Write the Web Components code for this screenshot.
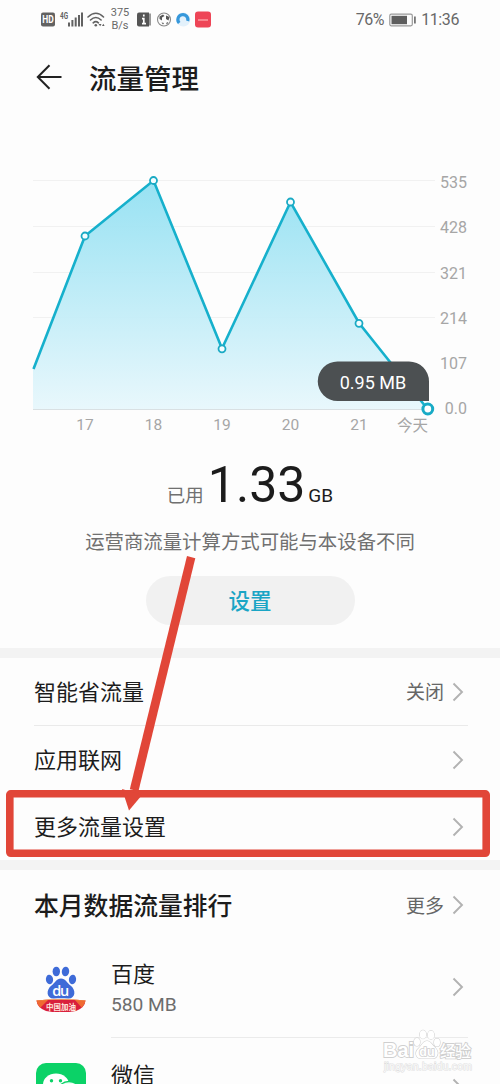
<!DOCTYPE html>
<html lang="zh-CN">
<head>
<meta charset="utf-8">
<title>流量管理</title>
<style>
html,body{margin:0;padding:0;background:#fdfdfd;overflow:hidden}
body{width:500px;height:1084px;font-family:Roboto,"Noto Sans CJK SC",sans-serif;color:#1c1c1c}
</style>
</head>
<body>
<traffic-page></traffic-page>
<script>
function define(name, html) {
  const t = document.createElement('template');
  t.innerHTML = html;
  customElements.define(name, class extends HTMLElement {
    constructor() {
      super();
      this.attachShadow({mode: 'open'}).append(t.content.cloneNode(true));
    }
  });
}

define('status-bar', `
<style>
:host{display:flex;align-items:center;height:38px;padding:1px 41px 0;box-sizing:border-box;color:#686868;font-size:16px;line-height:20px}
svg{display:block;flex:none}
.speed{width:20px;margin:0 7px 0 5px;font-size:11px;line-height:12.500px;text-align:center;white-space:nowrap}
.gap{flex:1}
.pct{letter-spacing:-.4px}
</style>
<svg width="64" height="20" viewBox="41 9.500 64 20">
  <rect x="41" y="12" width="14" height="14" rx="2" fill="#626262"/>
  <text x="48" y="22.500" font-size="10" font-weight="700" fill="#fff" text-anchor="middle" textLength="11.500" lengthAdjust="spacingAndGlyphs">HD</text>
  <text x="60" y="18" font-size="8.500" font-weight="700" fill="#626262" textLength="8" lengthAdjust="spacingAndGlyphs">4G</text>
  <path d="M69 22v4M72.400 19.500V26M75.700 17v9M79 14.500V26M82 12v14" stroke="#626262" stroke-width="2"/>
  <g fill="none" stroke="#626262" stroke-width="1.600" stroke-linecap="round"><path d="M88 16.500q8-7.500 15.500 0M90.500 19.500q5.300-5 10.600 0M93.200 22.300q2.600-2.300 5.200 0"/></g>
  <circle cx="95.800" cy="24.700" r="1.300" fill="#626262"/><path d="M98.500 23.500l1.700 2.300 1.300-2.300zM102 25.500l1.300-2.300 1.300 2.300z" fill="#626262"/>
</svg>
<span class="speed">375<br>B/s</span>
<svg width="76" height="20" viewBox="136 9.500 76 20">
  <path d="M138 12h10v14h-10q-2 0-2-2V14q0-2 2-2z" fill="#555"/><path d="M148 13h2v12h-2z" fill="#999"/>
  <path d="M142.800 14v2M141 18.200h1.800v5M141 23.200h4" stroke="#fff" stroke-width="1.700" fill="none"/>
  <circle cx="163" cy="19" r="6.500" fill="none" stroke="#888" stroke-width="1.100"/>
  <path d="M158.500 16l3.500-2 1.500 1.500-2.500 1.500v3l-2.500-1.500zM165 15l3.500 1.500-1 3.500-2.500-1.500zM160.500 22l2.500 .5-1 1.500zM166 21.500l1.500 1-2.500 1.500z" fill="#555"/>
  <circle cx="182.300" cy="19" r="7" fill="#e3f1fb"/>
  <path d="M178.200 22.500A5 5 0 1 1 186.700 20.500" fill="none" stroke="#3698db" stroke-width="3.200"/>
  <rect x="194" y="11" width="16" height="16" rx="3" fill="#ee4557"/><path d="M197 19.500h10" stroke="#ffb3b5" stroke-width="1.200"/>
</svg>
<span class="gap"></span>
<span class="pct">76%</span>
<svg width="27" height="14" viewBox="0 0 27 14" style="margin:0 5px">
  <rect x=".8" y="1.200" width="22.500" height="11.600" rx="1.500" fill="none" stroke="#999" stroke-width="1.200"/>
  <rect x="2.500" y="2.800" width="15.500" height="8.400" fill="#5e5e5e"/><rect x="25" y="3.500" width="1.800" height="7" fill="#777"/>
</svg>
<span class="pct">11:36</span>`);

define('title-bar', `
<style>
:host{display:flex;align-items:center;height:80px;padding-left:36px;box-sizing:border-box;font-size:27.500px;font-weight:500;line-height:40px}
svg{display:block;margin:-2px 27px 0 0}
.title{padding-top:3px}
</style>
<svg width="26" height="26" viewBox="0 0 26 26" fill="none" stroke="#222" stroke-width="2"><path d="M25.500 13H2M13.500 1.300L1.800 13l11.700 11.700"/></svg>
<span class="title"><slot></slot></span>`);

define('usage-chart', `
<style>
:host{display:block;height:322px}
svg{display:block}
.line{stroke:#f1f1f1;stroke-width:1}
.axis{fill:#a6a6a6;font-size:16px;text-anchor:end}
.day{fill:#a6a6a6;font-size:15.500px;text-anchor:middle}
</style>
<svg width="500" height="322" viewBox="0 118 500 322">
  <defs><linearGradient id="fill" x1="0" y1="180" x2="0" y2="409" gradientUnits="userSpaceOnUse"><stop stop-color="#91e0f2"/><stop offset="1" stop-color="#e7f7fc"/></linearGradient></defs>
  <path class="line" d="M33 180.500H435M33 226.500H435M33 272.500H435M33 317.500H435"/>
  <path d="M33 369L85 236L153.500 180.500L222 348.500L290.500 202L359 323L427.500 409H33z" fill="url(#fill)" opacity=".94"/>
  <path d="M33 409.500H428" stroke="#d9e0e3" stroke-width="1.200"/>
  <path d="M33.500 369L85 236L153.500 180.500L222 348.500L290.500 202L359 323L427.500 409" fill="none" stroke="#16b0cc" stroke-width="2.600"/>
  <g fill="#f4fdff" stroke="#1aaac4" stroke-width="1.800"><circle cx="85" cy="236" r="3.500"/><circle cx="153.500" cy="180.500" r="3.500"/><circle cx="222" cy="348.800" r="3.500"/><circle cx="290.500" cy="202" r="3.500"/><circle cx="359" cy="323.300" r="3.500"/></g>
  <path d="M337.500 361.500H409a20 20 0 0 1 20 20V401H337.500a19.750 19.750 0 0 1 0-39.500z" fill="#4c5052"/>
  <circle cx="427.800" cy="409" r="4.900" fill="#fff" stroke="#18abc6" stroke-width="3"/>
  <text x="373" y="389" font-size="18" fill="#fff" text-anchor="middle">0.95 MB</text>
  <g class="axis"><text x="467" y="187.500">535</text><text x="467" y="233">428</text><text x="467" y="278.500">321</text><text x="467" y="324">214</text><text x="467" y="369">107</text><text x="467" y="414.300">0.0</text></g>
  <g class="day"><text x="85" y="430">17</text><text x="153.500" y="430">18</text><text x="222" y="430">19</text><text x="290.500" y="430">20</text><text x="359" y="430">21</text><text x="412.500" y="430.500">今天</text></g>
</svg>`);

define('usage-total', `
<style>
:host{display:flex;flex-direction:column;align-items:center;height:208px}
.total{display:flex;align-items:baseline;height:80px;line-height:80px;margin-top:5px}
.used{font-size:18.500px;color:#707070;margin-right:4px}
.num{font-size:50px}
.unit{font-size:19px;margin-left:3px}
.note{font-size:19.400px;line-height:28px;margin-top:4px;color:#707070;white-space:nowrap}
button{width:209px;height:49px;margin:19px 0 0;padding:3px 0 0;box-sizing:border-box;border:0;border-radius:25px;background:#f1f1f1;color:#1aa5c5;font:500 21.500px/46px Roboto,"Noto Sans CJK SC",sans-serif}
</style>
<div class="total"><span class="used">已用</span><span class="num">1.33</span><span class="unit">GB</span></div>
<div class="note">运营商流量计算方式可能与本设备不同</div>
<button>设置</button>`);

define('section-gap', `<style>:host{display:block;height:10px;background:#f3f3f3}</style>`);

define('chevron-icon', `
<style>:host{display:block;width:12px;height:20px}svg{display:block}</style>
<svg width="12" height="20" viewBox="0 0 12 20" fill="none" stroke="#b2b2b2" stroke-width="1.900"><path d="M1.500 1.500L10 10l-8.500 8.500"/></svg>`);

define('setting-row', `
<style>
:host{display:flex;align-items:center;height:67px;margin:0 32px 0 34px;padding-right:4px;box-sizing:border-box;font-size:22px;line-height:32px}
:host([divided]){height:68px;border-bottom:1px solid #eaeaea}
:host([heading]){font-size:24.800px;font-weight:500;padding-top:3px}
.label{flex:1;padding-top:3px}
.value{font-size:19px;font-weight:400;color:#666;margin-right:8px;padding-top:3px}
</style>
<span class="label"><slot></slot></span><span class="value"><slot name="value"></slot></span><chevron-icon></chevron-icon>`);

define('app-row', `
<style>
:host{display:flex;height:101px;padding-left:36px}
.icon{width:50px;flex:none;margin-right:25px;padding-top:25px;height:50px}
.body{display:flex;align-items:center;flex:1;height:100px;border-bottom:1px solid #ebebeb;margin-right:32px;padding-right:4px}
.text{flex:1;padding-top:3px}
.name{font-size:22px;line-height:32px}
.size{font-size:19.200px;line-height:28px;height:28px;color:#6d6d6d}
</style>
<div class="icon"><slot name="icon"></slot></div>
<div class="body"><div class="text"><div class="name"><slot></slot></div><div class="size"><slot name="size"></slot></div></div><chevron-icon></chevron-icon></div>`);

define('baidu-icon', `
<style>:host{display:block}svg{display:block}</style>
<svg width="50" height="50" viewBox="36 962 50 50">
  <defs><clipPath id="b"><path d="M36.500 1000.500Q61 998 85.500 1000.500Q85 1007.500 76 1011Q61 1014 46 1011Q37 1007.500 36.500 1000.500z"/></clipPath></defs>
  <g fill="#3e6bd8"><ellipse cx="49.500" cy="979.500" rx="3.600" ry="4.700" transform="rotate(-10 49.500 979.500)"/><ellipse cx="56.300" cy="971.500" rx="3.700" ry="4.800"/><ellipse cx="65.500" cy="971.500" rx="3.700" ry="4.800" transform="rotate(8 65.500 971.500)"/><ellipse cx="72.500" cy="979.500" rx="3.600" ry="4.700" transform="rotate(10 72.500 979.500)"/>
  <path d="M61 978.500C65.500 978.500 67 983 70.500 985.500C76.500 990 75.500 999 68 998.500C63.500 998 58.500 998 54 998.500C46.500 999 45.500 990 51.500 985.500C55 983 56.500 978.500 61 978.500z"/></g>
  <text x="60.800" y="995.500" font-family="Open Sans" font-size="14.500" font-weight="600" fill="#fff" text-anchor="middle" textLength="17">du</text>
  <g clip-path="url(#b)"><rect x="36" y="998" width="50" height="16" fill="#d9203c"/><path d="M34 998L48 1000L40 1008zM88 998L75 1000L82 1008z" fill="#ef6a32"/><path d="M36 1000Q61 998.500 86 1000" fill="none" stroke="#f7b74e" stroke-width="1.200"/></g>
  <text x="61" y="1009.500" font-size="7.500" font-weight="700" fill="#ffe9df" text-anchor="middle">中国加油</text>
</svg>`);

define('wechat-icon', `
<style>:host{display:block}svg{display:block}</style>
<svg width="50" height="50" viewBox="0 0 50 50"><rect width="50" height="50" rx="10" fill="#0bd267"/>
  <ellipse cx="20" cy="21.500" rx="13" ry="11" fill="#fff"/><circle cx="15.500" cy="17.700" r="1.700" fill="#0bd267"/><circle cx="24.500" cy="17.700" r="1.700" fill="#0bd267"/>
  <ellipse cx="33" cy="28" rx="11" ry="9.500" fill="#e9fff3" stroke="#0bd267" stroke-width="1.300"/></svg>`);

define('page-marks', `
<style>:host{position:absolute;left:0;top:0;pointer-events:none}svg{display:block}</style>
<svg width="500" height="1084" viewBox="0 0 500 1084">
  <rect x="9.800" y="793.800" width="476.400" height="59.500" rx="1" fill="none" stroke="#e14638" stroke-width="7.600" stroke-linejoin="round"/>
  <path d="M187 556l8.300 2.300L138.500 791l-8.700-1.800z" fill="#e14638"/><path d="M122 789L142 795L129 810.500z" fill="#e14638"/>
  <g fill="#fff" stroke="#cfcfcf" stroke-width="1.100" paint-order="stroke">
    <g stroke-width="1.800"><text x="383" y="1057" font-family="Liberation Sans" font-size="20" font-weight="700" textLength="31" lengthAdjust="spacingAndGlyphs">Bai</text><text x="440" y="1057" font-size="16" font-weight="500" textLength="31">经验</text></g>
    <ellipse cx="417" cy="1042" rx="3" ry="4"/><ellipse cx="423" cy="1034.500" rx="3.200" ry="4.300"/><ellipse cx="431" cy="1035" rx="3.200" ry="4.300"/><ellipse cx="437" cy="1042.500" rx="3" ry="4"/>
    <path d="M427 1041C431 1041 432 1045 435.500 1048C440 1053 437 1059 432 1058.500H422C415.500 1059 414 1052 419 1048C422 1045 423 1041 427 1041z"/>
    <text x="427" y="1056" font-family="Liberation Sans" font-size="12.500" font-weight="700" text-anchor="middle" stroke-width="1.600">du</text>
  </g>
  <text x="384" y="1070" font-family="Liberation Sans" font-size="10.500" fill="#fafafa" stroke="#dedede" stroke-width="1" paint-order="stroke" textLength="88">jingyan.baidu.com</text>
</svg>`);

define('traffic-page', `
<style>:host{display:block;position:relative;width:500px;height:1084px;overflow:hidden;background:#fdfdfd}</style>
<status-bar></status-bar>
<title-bar>流量管理</title-bar>
<usage-chart></usage-chart>
<usage-total></usage-total>
<section-gap></section-gap>
<setting-row divided>智能省流量<span slot="value">关闭</span></setting-row>
<setting-row>应用联网</setting-row>
<setting-row>更多流量设置</setting-row>
<section-gap></section-gap>
<setting-row heading>本月数据流量排行<span slot="value">更多</span></setting-row>
<app-row><baidu-icon slot="icon"></baidu-icon>百度<span slot="size">580 MB</span></app-row>
<app-row><wechat-icon slot="icon"></wechat-icon>微信</app-row>
<page-marks></page-marks>`);
</script>
</body>
</html>
